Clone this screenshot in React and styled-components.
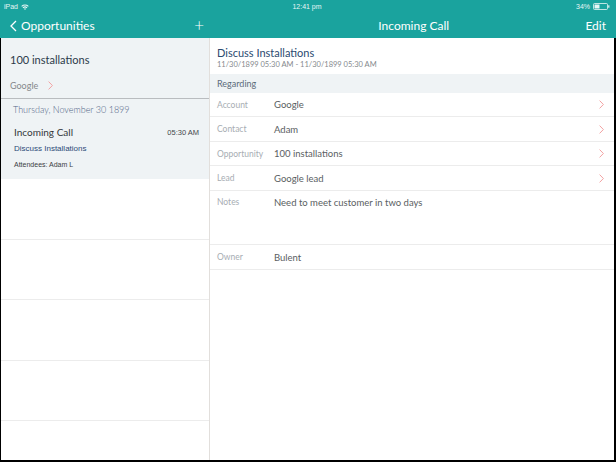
import React from 'react'
import styled, { createGlobalStyle } from 'styled-components'

const GlobalStyle = createGlobalStyle`
    html, body { margin: 0; padding: 0; background: #ffffff; }
    body { font-family: Lato, "Open Sans", sans-serif; font-weight: 400; }
    * { box-sizing: border-box; }
`

const TEAL = '#1aa39e'
const PINK = '#f2a2a2'

const Screen = styled.div`
    width: 616px;
    height: 462px;
    display: flex;
    flex-direction: column;
    overflow: hidden;
`

const StatusBar = styled.div`
    height: 13px;
    background: ${TEAL};
    color: #e8f6f5;
    font-family: "Liberation Sans", Arial, sans-serif;
    font-size: 7px;
    display: grid;
    grid-template-columns: 1fr auto 1fr;
    align-items: center;
    padding: 0 6px 0 4px;
`

const StatusSide = styled.div`
    display: flex;
    align-items: center;
    gap: 3px;
    justify-content: ${p => p.$end ? 'flex-end' : 'flex-start'};
`

const NavBar = styled.div`
    height: 25px;
    background: ${TEAL};
    color: #ffffff;
    display: flex;
    align-items: center;
    font-size: 12px;
`

const NavLeft = styled.div`
    width: 210px;
    display: flex;
    align-items: center;
    padding: 0 6px 0 10px;
    gap: 4px;
`

const NavRight = styled.div`
    flex: 1;
    display: flex;
    align-items: center;
    justify-content: space-between;
    padding: 0 10px 0 10px;
`

const NavSpacer = styled.span`
    width: 22px;
`

const Plus = styled.span`
    margin-left: auto;
    font-size: 17px;
    font-weight: 300;
    line-height: 1;
    margin-top: -2px;
`

const Body = styled.div`
    flex: 1;
    display: flex;
    border-left: 1px solid #000;
    border-right: 2px solid #000;
    border-bottom: 2px solid #000;
    min-height: 0;
`

const LeftPane = styled.div`
    width: 209px;
    border-right: 1px solid #e2dfdc;
    display: flex;
    flex-direction: column;
`

const OppHeader = styled.div`
    height: 61px;
    background: #eff3f5;
    border-bottom: 1px solid #b9bcbf;
    padding: 15px 9px 0 9px;
    display: flex;
    flex-direction: column;
`

const OppTitle = styled.div`
    font-size: 11px;
    color: #2c3a4a;
    height: 14px;
    line-height: 14px;
`

const OppAccount = styled.div`
    margin-top: 13px;
    font-size: 9px;
    color: #85888b;
    display: flex;
    align-items: center;
`

const AccountName = styled.span`
    width: 38px;
`

const DateRow = styled.div`
    height: 20px;
    background: #eff3f5;
    color: #4f6586;
    font-size: 9px;
    font-weight: 300;
    padding: 0 12px;
    display: flex;
    align-items: center;
`

const EventCard = styled.div`
    height: 60px;
    background: #eff3f5;
    padding: 6px 10px 0 13px;
    display: flex;
    flex-direction: column;
`

const EventTop = styled.div`
    display: flex;
    justify-content: space-between;
    align-items: center;
    height: 14px;
`

const EventTitle = styled.span`
    font-size: 10px;
    color: #33373b;
`

const EventTime = styled.span`
    font-family: "Liberation Sans", Arial, sans-serif;
    font-size: 7.5px;
    color: #44484c;
`

const EventSubject = styled.div`
    margin-top: 4px;
    font-family: "Liberation Sans", Arial, sans-serif;
    font-size: 8px;
    color: #2c4a78;
    height: 12px;
    line-height: 12px;
`

const EventAttendees = styled.div`
    margin-top: 5px;
    font-family: "Liberation Sans", Arial, sans-serif;
    font-size: 7px;
    color: #3c4044;
    height: 10px;
    line-height: 10px;
`

const EmptyRow = styled.div`
    height: ${p => p.$h}px;
    flex-shrink: 0;
    border-bottom: 1px solid #ececec;
`

const RightPane = styled.div`
    flex: 1;
    display: flex;
    flex-direction: column;
`

const DetailHeader = styled.div`
    height: 36px;
    padding: 8px 7px 0 7px;
`

const DetailTitle = styled.div`
    font-size: 11px;
    color: #2b4a70;
    height: 14px;
    line-height: 14px;
`

const DetailDate = styled.div`
    font-size: 7.5px;
    color: #85898d;
    line-height: 9px;
`

const SectionBar = styled.div`
    height: 19px;
    background: #eff3f5;
    color: #5c6b7a;
    font-size: 9px;
    padding: 0 7px;
    display: flex;
    align-items: center;
`

const FieldRow = styled.div`
    height: ${p => p.$h}px;
    border-bottom: 1px solid #ececec;
    display: flex;
    align-items: ${p => p.$tall ? 'flex-start' : 'center'};
    padding: ${p => p.$tall ? '6px' : '0'} 10px 0 7px;
`

const FieldLabel = styled.span`
    width: 57px;
    flex-shrink: 0;
    font-size: 8.5px;
    color: #a7adb3;
`

const FieldValue = styled.span`
    flex: 1;
    font-size: 9.5px;
    color: #5a5e62;
`

const Chevron = ({ color = PINK }) => (
    <svg width="5" height="9" viewBox="0 0 5 9" fill="none">
        <polyline points="0.6,0.6 4.4,4.5 0.6,8.4" stroke={color} strokeWidth="1" />
    </svg>
)

const BackChevron = () => (
    <svg width="7" height="12" viewBox="0 0 7 12" fill="none">
        <polyline points="6,1 1,6 6,11" stroke="#ffffff" strokeWidth="1.3" />
    </svg>
)

const Wifi = () => (
    <svg width="8" height="6" viewBox="0 0 8 6">
        <path d="M0.3 2 A5.5 5.5 0 0 1 7.7 2 L7 2.8 A4.4 4.4 0 0 0 1 2.8 Z" fill="#e8f6f5" />
        <path d="M1.6 3.4 A3.6 3.6 0 0 1 6.4 3.4 L5.7 4.2 A2.5 2.5 0 0 0 2.3 4.2 Z" fill="#e8f6f5" />
        <path d="M3 4.8 A1.4 1.4 0 0 1 5 4.8 L4 5.9 Z" fill="#e8f6f5" />
    </svg>
)

const Battery = () => (
    <svg width="17" height="7" viewBox="0 0 17 7">
        <rect x="0.5" y="0.5" width="14" height="6" rx="1" fill="none" stroke="#e8f6f5" strokeWidth="0.8" />
        <rect x="1.5" y="1.5" width="5" height="4" fill="#e8f6f5" />
        <rect x="15.2" y="2.3" width="1.2" height="2.4" fill="#e8f6f5" />
    </svg>
)

const fields = [
    { label: 'Account', value: 'Google', link: true, h: 24 },
    { label: 'Contact', value: 'Adam', link: true, h: 25 },
    { label: 'Opportunity', value: '100 installations', link: true, h: 24 },
    { label: 'Lead', value: 'Google lead', link: true, h: 25 },
    { label: 'Notes', value: 'Need to meet customer in two days', tall: true, h: 54 },
    { label: 'Owner', value: 'Bulent', h: 25 },
]

const emptyRows = [61, 60, 61, 60]

export default function App() {
    return (
        <Screen>
            <GlobalStyle />
            <StatusBar>
                <StatusSide>iPad <Wifi /></StatusSide>
                <span>12:41 pm</span>
                <StatusSide $end>34% <Battery /></StatusSide>
            </StatusBar>
            <NavBar>
                <NavLeft>
                    <BackChevron />
                    <span>Opportunities</span>
                    <Plus>+</Plus>
                </NavLeft>
                <NavRight>
                    <NavSpacer />
                    <span>Incoming Call</span>
                    <span>Edit</span>
                </NavRight>
            </NavBar>
            <Body>
                <LeftPane>
                    <OppHeader>
                        <OppTitle>100 installations</OppTitle>
                        <OppAccount>
                            <AccountName>Google</AccountName>
                            <Chevron />
                        </OppAccount>
                    </OppHeader>
                    <DateRow>Thursday, November 30 1899</DateRow>
                    <EventCard>
                        <EventTop>
                            <EventTitle>Incoming Call</EventTitle>
                            <EventTime>05:30 AM</EventTime>
                        </EventTop>
                        <EventSubject>Discuss Installations</EventSubject>
                        <EventAttendees>Attendees: Adam L</EventAttendees>
                    </EventCard>
                    {emptyRows.map((h, i) => <EmptyRow key={i} $h={h} />)}
                </LeftPane>
                <RightPane>
                    <DetailHeader>
                        <DetailTitle>Discuss Installations</DetailTitle>
                        <DetailDate>11/30/1899 05:30 AM - 11/30/1899 05:30 AM</DetailDate>
                    </DetailHeader>
                    <SectionBar>Regarding</SectionBar>
                    {fields.map(f => (
                        <FieldRow key={f.label} $tall={f.tall} $h={f.h}>
                            <FieldLabel>{f.label}</FieldLabel>
                            <FieldValue>{f.value}</FieldValue>
                            {f.link && <Chevron />}
                        </FieldRow>
                    ))}
                </RightPane>
            </Body>
        </Screen>
    )
}
